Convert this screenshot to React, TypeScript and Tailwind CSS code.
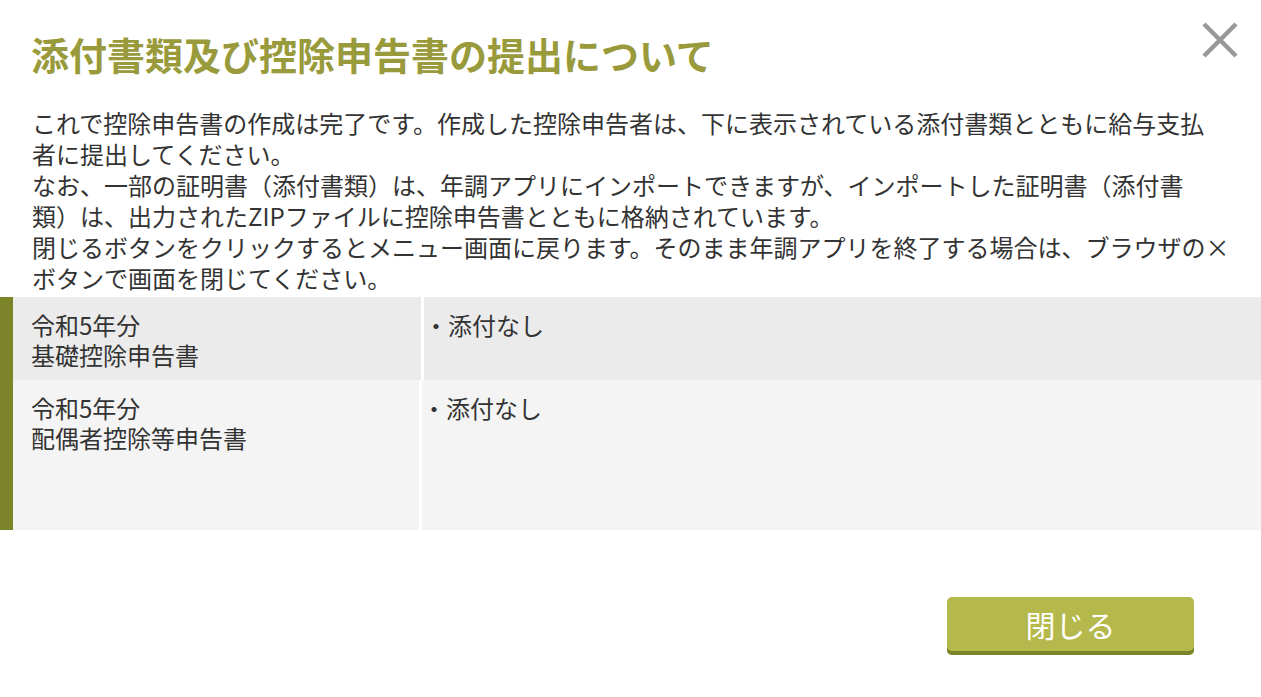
const rows = [
  { year: '令和5年分', name: '基礎控除申告書', note: '・添付なし', bg: 'bg-[#ebebeb]', h: 'h-[83px]', left: 'w-[408px]' },
  { year: '令和5年分', name: '配偶者控除等申告書', note: '・添付なし', bg: 'bg-[#f4f4f4]', h: 'h-[150px]', left: 'w-[406px]' },
]

const lines = [
  'これで控除申告書の作成は完了です。作成した控除申告者は、下に表示されている添付書類とともに給与支払',
  '者に提出してください。',
  'なお、一部の証明書（添付書類）は、年調アプリにインポートできますが、インポートした証明書（添付書',
  '類）は、出力されたZIPファイルに控除申告書とともに格納されています。',
  '閉じるボタンをクリックするとメニュー画面に戻ります。そのまま年調アプリを終了する場合は、ブラウザの×',
  'ボタンで画面を閉じてください。',
]

export default function App() {
  return (
    <div
      className="relative min-h-[697px] w-[1261px] overflow-hidden bg-white text-[#333333]"
      style={{ fontFamily: '"Noto Sans CJK JP", "Noto Sans", sans-serif' }}
    >
      <button className="absolute left-[1200px] top-[20px] h-[40px] w-[40px]" aria-label="close">
        <svg viewBox="0 0 40 40" className="h-[40px] w-[40px]">
          <path d="M4 4 L36 36 M36 4 L4 36" stroke="#999999" strokeWidth="4.5" />
        </svg>
      </button>

      <h1 className="whitespace-nowrap pl-[31px] pt-[28px] text-[38px] font-bold leading-[52px] text-[#999a3b]">
        添付書類及び控除申告書の提出について
      </h1>

      <div className="mt-[27px] pl-[32px] text-[24px] leading-[31px]">
        {lines.map((l) => (
          <div key={l} className="whitespace-nowrap">
            {l}
          </div>
        ))}
      </div>

      <div className="mt-[4px] flex">
        <div className="w-[13px] bg-[#7b8429]" />
        <div className="flex-1">
          {rows.map((r) => (
            <div key={r.name} className={`flex ${r.h}`}>
              <div className={`${r.left} ${r.bg} pl-[18px] pt-[13px] text-[24px] leading-[30px]`}>
                <div>{r.year}</div>
                <div>{r.name}</div>
              </div>
              <div className="w-[3px] bg-white" />
              <div className={`flex-1 ${r.bg} pt-[13px] text-[24px] leading-[30px]`}>{r.note}</div>
            </div>
          ))}
        </div>
      </div>

      <div className="mt-[67px] flex justify-end pr-[67px]">
        <button className="h-[58px] w-[247px] rounded-[5px] bg-[#b5b84b] pb-[4px] text-[30px] leading-[54px] text-white shadow-[inset_0_-4px_0_#7a8429]">
          閉じる
        </button>
      </div>
    </div>
  )
}
